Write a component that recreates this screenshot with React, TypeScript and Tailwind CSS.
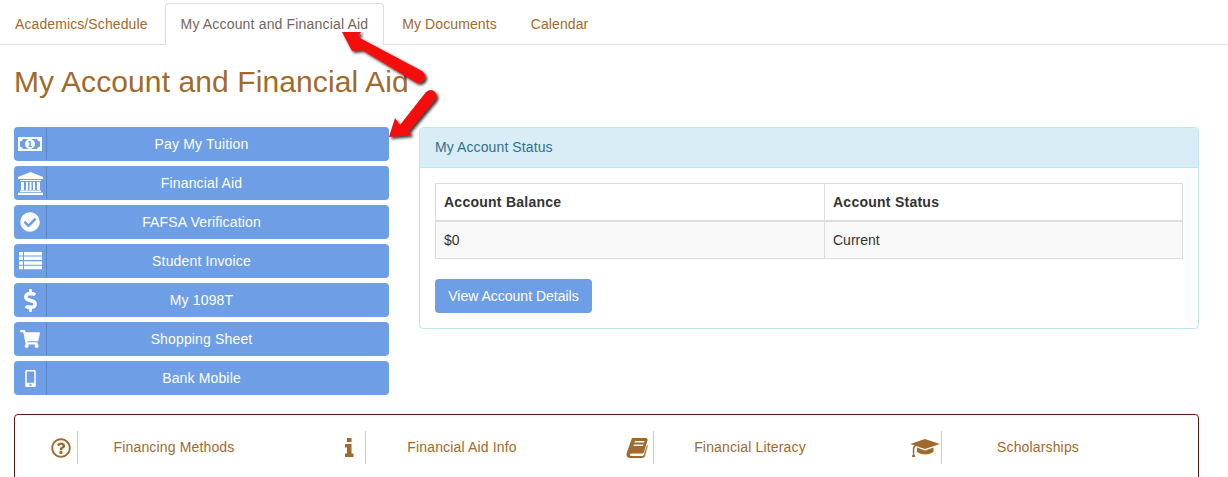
import type { ReactNode } from 'react';
import { FaCheckCircle, FaDollarSign, FaMobileAlt, FaRegQuestionCircle, FaShoppingCart } from 'react-icons/fa';

const tabs = ['Academics/Schedule', 'My Account and Financial Aid', 'My Documents', 'Calendar'];

function MoneyIcon() {
  return (
    <svg width="24" height="14" viewBox="0 0 24 14" fill="currentColor">
      <path
        fillRule="evenodd"
        d="M0 0H24V14H0Z M5 2 Q4.5 4 2 4.5 V9.5 Q4.5 10 5 12 H19 Q19.5 10 22 9.5 V4.5 Q19.5 4 19 2Z"
      />
      <circle cx="12" cy="7" r="5" />
      <path d="M11 4 H12.8 V9 H14 V10 H10.4 V9 H11.4 V5.2 L10.4 5.8 V4.8Z" fill="#6d9ee6" />
    </svg>
  );
}

function BankIcon() {
  return (
    <svg width="25" height="23" viewBox="0 0 25 23" fill="currentColor">
      <path d="M12.5 0 L25 5 V7 H0 V5Z" />
      <path d="M2 8 H23 V9 H2Z M3 10 H6 V18 H3Z M8 10 H10 V18 H8Z M11.5 10 H13.5 V18 H11.5Z M15 10 H17 V18 H15Z M19 10 H22 V18 H19Z" />
      <path d="M2 18.5 H23 V20 H2Z M0 20.8 H25 V23 H0Z" />
    </svg>
  );
}

function ListIcon() {
  return (
    <svg width="23" height="18" viewBox="0 0 23 18" fill="currentColor">
      <path d="M0 0H4V3.5H0Z M5 0H23V3.5H5Z M0 4.6H4V8.1H0Z M5 4.6H23V8.1H5Z M0 9.2H4V12.7H0Z M5 9.2H23V12.7H5Z M0 13.8H4V17.3H0Z M5 13.8H23V17.3H5Z" />
    </svg>
  );
}

function InfoIcon() {
  return (
    <svg width="9" height="19" viewBox="0 0 9 19" fill="currentColor">
      <path d="M2 0H6.5V4H2Z M0 6H6.5V15.5H8.5V19H0V15.5H2V9.5H0Z" />
    </svg>
  );
}

function BookIcon() {
  return (
    <svg width="22" height="22" viewBox="0 0 22 22" fill="currentColor">
      <path
        fillRule="evenodd"
        d="M6 1 H20 Q22 1 21.5 3.5 L18 15 Q17.5 16.5 16 16.5 H5.5 Q3.5 16.5 3.8 18 Q4 19 6 19 H16 Q17.5 19 18 17.5 L21 8 L21.8 8.5 L19 19 Q18.5 21 16 21 H4 Q1 21 0.5 18 Q0.3 17 1 15 Z M9 4 L8.5 5.5 H18 L18.5 4Z M8 7.5 L7.5 9 H17 L17.5 7.5Z"
      />
    </svg>
  );
}

function CapIcon() {
  return (
    <svg width="30" height="18" viewBox="0 0 30 18" fill="currentColor">
      <path d="M15 0 L30 5 L15 10 L6 7 Q4.5 8 4.3 10 V14 H2.8 V9.5 Q3 7 4.6 6.2 L0 5Z" />
      <path d="M7 8.5 L15 11.5 L23.5 8.5 V13 Q15 18 7 13Z" />
      <path d="M3.5 13 L5.5 18 H1.8Z" />
    </svg>
  );
}

const actions: { label: string; icon: ReactNode }[] = [
  { label: 'Pay My Tuition', icon: <MoneyIcon /> },
  { label: 'Financial Aid', icon: <BankIcon /> },
  { label: 'FAFSA Verification', icon: <FaCheckCircle className="text-[20px]" /> },
  { label: 'Student Invoice', icon: <ListIcon /> },
  { label: 'My 1098T', icon: <FaDollarSign className="text-[23px]" /> },
  { label: 'Shopping Sheet', icon: <FaShoppingCart className="text-[20px]" /> },
  { label: 'Bank Mobile', icon: <FaMobileAlt className="text-[17px]" /> },
];

const links: { label: string; icon: ReactNode }[] = [
  { label: 'Financing Methods', icon: <FaRegQuestionCircle className="text-[20px]" /> },
  { label: 'Financial Aid Info', icon: <InfoIcon /> },
  { label: 'Financial Literacy', icon: <BookIcon /> },
  { label: 'Scholarships', icon: <CapIcon /> },
];

function Arrows() {
  return (
    <svg className="absolute left-0 top-0 pointer-events-none" width="460" height="150">
      <defs>
        <filter id="arrowShadow" x="-20%" y="-20%" width="150%" height="150%">
          <feDropShadow dx="2" dy="2" stdDeviation="1.4" floodColor="#000" floodOpacity="0.8" />
        </filter>
      </defs>
      <g filter="url(#arrowShadow)" fill="#f40a0a">
        <path d="M342 32 L361 32 L358 37 L422 71 Q427 75 424 80 Q420 85 415 82 L362 50 L352 51 Z" />
        <path d="M389 137 L395 118 L400 125 L426 92 Q431 88 435 92 Q438 96 435 100 L409 131 L411 135 Z" />
      </g>
    </svg>
  );
}

export default function App() {
  return (
    <div className="relative h-[477px] w-[1228px] overflow-hidden bg-white font-['Liberation_Sans',Arial,sans-serif] text-[14px] text-[#333]">
      {/* Tabs */}
      <div className="flex h-[45px] items-end border-b border-[#ddd] tracking-[0.1px]">
        {tabs.map((tab, i) =>
          i === 1 ? (
            <div
              key={tab}
              className="-mb-px mr-[3px] flex h-[42px] items-center rounded-t border border-b-0 border-[#ddd] bg-white px-[15px] tracking-[0.17px] text-[#72665c]"
            >
              {tab}
            </div>
          ) : (
            <div key={tab} className={`flex h-[42px] items-center px-[15px] pt-[2px] text-[#9f6a2b] ${i === 0 ? 'mr-[2px]' : 'mr-[4px]'}`}>
              {tab}
            </div>
          ),
        )}
      </div>

      <div className="px-[14px]">
        <h1 className="mt-[19px] text-[30px] leading-[36px] tracking-[0.1px] text-[#9f6a2b]">My Account and Financial Aid</h1>

        <div className="mt-[27px] flex items-start gap-[30px]">
          {/* Action buttons */}
          <div className="flex w-[375px] flex-col gap-[5px]">
            {actions.map(({ label, icon }) => (
              <div key={label} className="flex h-[34px] items-stretch rounded bg-[#6d9ee6] text-white">
                <div className="my-px flex w-[33px] items-center justify-center border-r border-[#5a83bf]">{icon}</div>
                <div className="flex flex-1 items-center justify-center pr-[33px] tracking-[0.15px]">{label}</div>
              </div>
            ))}
          </div>

          {/* Account status panel */}
          <div className="h-[202px] w-[780px] rounded border border-[#bce8f1]">
            <div className="flex h-[40px] items-center border-b border-[#bce8f1] bg-[#d9edf7] px-[15px] tracking-[0.1px] text-[#31708f]">
              My Account Status
            </div>
            <div className="p-[15px]">
              <div className="border border-[#ddd]">
                <div className="flex h-[38px] border-b-2 border-[#ddd] font-bold tracking-[0.25px]">
                  <div className="flex w-[389px] items-center border-r border-[#ddd] px-[8px]">Account Balance</div>
                  <div className="flex flex-1 items-center px-[8px]">Account Status</div>
                </div>
                <div className="flex h-[36px] bg-[#f9f9f9]">
                  <div className="flex w-[389px] items-center border-r border-[#ddd] px-[8px]">$0</div>
                  <div className="flex flex-1 items-center px-[8px]">Current</div>
                </div>
              </div>
              <div className="mt-[20px] flex h-[34px] w-[157px] items-center justify-center rounded bg-[#6d9ee6] text-white">
                View Account Details
              </div>
            </div>
          </div>
        </div>

        {/* Secondary links */}
        <div className="mt-[19px] flex h-[80px] w-[1185px] items-start rounded border border-[#6b1414] px-[15px] pt-[16px] tracking-[0.15px] text-[#9f6a2b]">
          {links.map(({ label, icon }) => (
            <div key={label} className="flex h-[33px] w-[288px] items-stretch pl-[15px]">
              <div className="flex w-[33px] items-center justify-center border-r border-[#ccc]">{icon}</div>
              <div className="flex w-[192px] items-center justify-center">{label}</div>
            </div>
          ))}
        </div>
      </div>

      <Arrows />
    </div>
  );
}
